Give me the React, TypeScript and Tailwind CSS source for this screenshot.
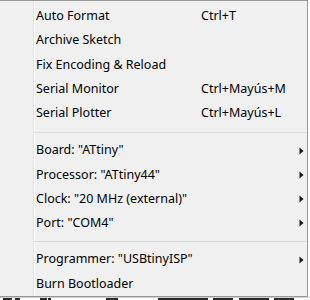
import React from "react";

type Item = { label: string; shortcut?: string; sub?: boolean } | { sep: true; h: string };

const items: Item[] = [
  { label: "Auto Format", shortcut: "Ctrl+T" },
  { label: "Archive Sketch" },
  { label: "Fix Encoding & Reload" },
  { label: "Serial Monitor", shortcut: "Ctrl+Mayús+M" },
  { label: "Serial Plotter", shortcut: "Ctrl+Mayús+L" },
  { sep: true, h: "h-[13px]" },
  { label: 'Board: "ATtiny"', sub: true },
  { label: 'Processor: "ATtiny44"', sub: true },
  { label: 'Clock: "20 MHz (external)"', sub: true },
  { label: 'Port: "COM4"', sub: true },
  { sep: true, h: "h-[12px]" },
  { label: 'Programmer: "USBtinyISP"', sub: true },
  { label: "Burn Bootloader" },
];

function Arrow() {
  return (
    <svg width="5" height="8" viewBox="0 0 5 8" className="shrink-0">
      <path d="M0.5 0.5 L4.5 4 L0.5 7.5 Z" fill="#1a1a1a" />
    </svg>
  );
}

const blocks = [
  "w-[9px] ml-[3px]",
  "w-[5px] ml-[3px]",
  "w-[7px] ml-[20px]",
  "w-[3px] ml-[1px]",
  "w-[12px] ml-[55px]",
  "w-[50px] ml-[40px]",
  "w-[20px] ml-[5px]",
  "w-[30px] ml-[6px]",
  "w-[20px] ml-[5px]",
];

export default function App() {
  return (
    <div
      className="w-[310px] h-[300px] overflow-hidden bg-white flex flex-col"
      style={{ fontFamily: '"Noto Sans", "Open Sans", sans-serif' }}
    >
      <div className="w-[308px] h-[297px] shrink-0 bg-[#f0f0f0] border-t border-r border-b border-[#979797] flex">
        <div className="w-[34px] shrink-0 border-r border-[#e2e2e2]" />
        <div className="flex-1 flex flex-col pt-[3.25px] border-l border-white">
          {items.map((it, i) =>
            "sep" in it ? (
              <div key={i} className={`${it.h} shrink-0 flex items-center -ml-px mr-[1px]`}>
                <div className="flex-1 h-px bg-[#dcdcdc]" />
              </div>
            ) : (
              <div
                key={i}
                className="h-[24.25px] shrink-0 flex items-center pl-[1px] pr-[3px] text-[12.5px] text-black whitespace-nowrap"
              >
                <span className="w-[165px] shrink-0">{it.label}</span>
                {it.shortcut && <span>{it.shortcut}</span>}
                <span className="flex-1" />
                {it.sub && <Arrow />}
              </div>
            )
          )}
        </div>
      </div>
      <div className="flex-1 flex items-start border-t border-[#cfcfcf]">
        {blocks.map((b, i) => (
          <div key={i} className={`${b} h-[2px] bg-[#2a2a2a] shrink-0`} />
        ))}
      </div>
    </div>
  );
}
